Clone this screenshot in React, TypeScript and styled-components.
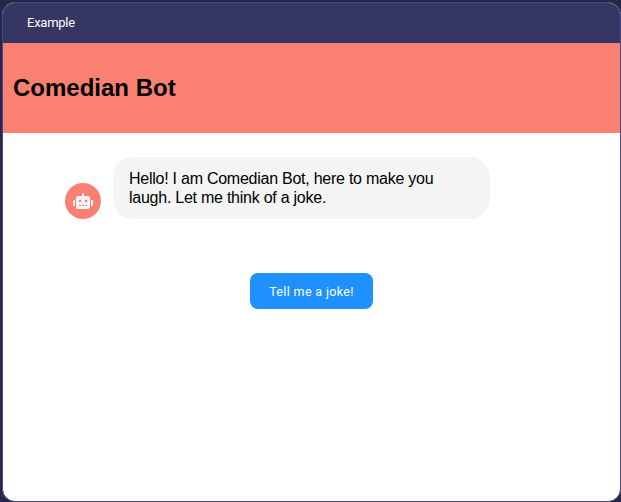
import React from "react";
import styled, { createGlobalStyle } from "styled-components";
import { FaRobot } from "react-icons/fa";

const GlobalStyle = createGlobalStyle`
  *, *::before, *::after { box-sizing: border-box; }
  body {
    margin: 0;
    background: #24294a;
    overflow: hidden;
    font-family: "Liberation Sans", Arial, sans-serif;
  }
`;

const Page = styled.div`
  height: 502px;
  padding: 2px 0 0 2px;
`;

const Window = styled.section`
  display: flex;
  flex-direction: column;
  width: 619px;
  height: 500px;
  overflow: hidden;
  border: 1px solid #48478a;
  border-radius: 13px;
  background: #fff;
`;

const TitleBar = styled.div`
  flex: none;
  height: 40px;
  padding-left: 24px;
  background: #353661;
  color: #fff;
  font-family: Roboto, sans-serif;
  font-size: 13px;
  letter-spacing: -0.25px;
  line-height: 39px;
`;

const Banner = styled.header`
  display: flex;
  align-items: center;
  flex: none;
  height: 90px;
  padding-left: 10px;
  background: #fa8072;
`;

const Heading = styled.h1`
  margin: 0;
  color: #000;
  font-size: 24px;
  line-height: 28px;
`;

const Chat = styled.main`
  display: flex;
  flex-direction: column;
  align-items: flex-start;
  padding: 24px 0 0 62px;
`;

const Message = styled.div`
  display: flex;
  align-items: flex-end;
  gap: 12px;
`;

const Avatar = styled.div`
  display: flex;
  align-items: center;
  justify-content: center;
  width: 36px;
  height: 36px;
  border-radius: 50%;
  background: #fa8072;
  color: #f4f4f4;

  svg {
    width: 20px;
    height: 16px;
  }
`;

const Bubble = styled.p`
  width: 377px;
  height: 62px;
  margin: 0;
  padding: 12px 16px;
  border-radius: 20px;
  background: #f4f4f4;
  color: #000;
  font-size: 16px;
  letter-spacing: -0.25px;
  line-height: 19px;
`;

const JokeButton = styled.button`
  width: 123px;
  height: 36px;
  margin: 54px 0 0 185px;
  padding: 0;
  border: 0;
  border-radius: 8px;
  background: #1e90ff;
  color: #fff;
  font-family: Roboto, sans-serif;
  font-size: 12.5px;
  letter-spacing: 0.35px;
`;

export default function App() {
  return (
    <Page>
      <GlobalStyle />
      <Window>
        <TitleBar>Example</TitleBar>
        <Banner>
          <Heading>Comedian Bot</Heading>
        </Banner>
        <Chat>
          <Message>
            <Avatar>
              <FaRobot />
            </Avatar>
            <Bubble>
              Hello! I am Comedian Bot, here to make you laugh. Let me think of a joke.
            </Bubble>
          </Message>
          <JokeButton type="button">Tell me a joke!</JokeButton>
        </Chat>
      </Window>
    </Page>
  );
}
